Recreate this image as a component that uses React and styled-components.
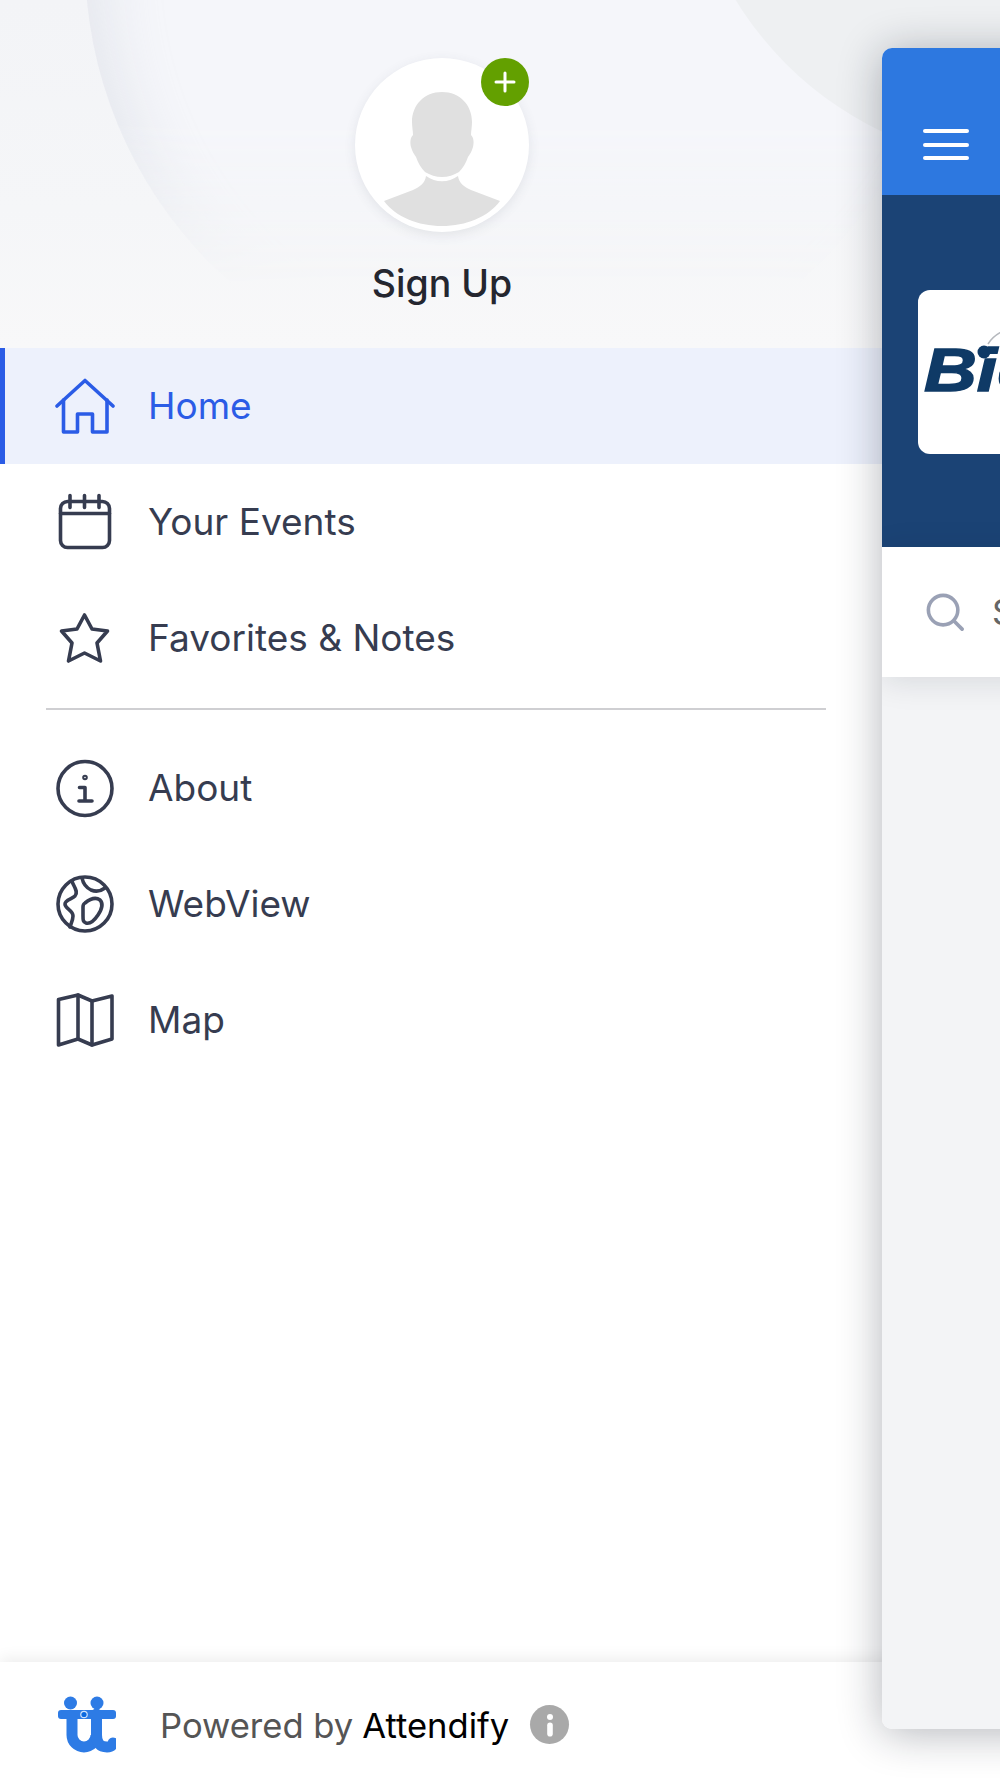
import React from 'react'
import styled, { createGlobalStyle } from 'styled-components'

const GlobalStyle = createGlobalStyle`
	html, body {
		margin: 0;
		padding: 0;
		background: #fff;
	}
	* {
		box-sizing: border-box;
	}
`

const Screen = styled.div`
	position: relative;
	width: 1000px;
	height: 1778px;
	overflow: hidden;
	display: flex;
	flex-direction: column;
	background: #fff;
	font-family: Inter, 'Liberation Sans', sans-serif;
`

const Header = styled.header`
	position: relative;
	height: 348px;
	flex-shrink: 0;
	overflow: hidden;
	display: flex;
	flex-direction: column;
	align-items: center;
	padding: 58px 116px 0 0;
	background: linear-gradient(180deg, #f3f4f7 0%, #f5f6f8 60%, #f8f8f9 100%);
`

const SwooshFade = styled.div`
	position: absolute;
	inset: 0;
	overflow: hidden;
	mask-image: linear-gradient(180deg, #000 35%, transparent 82%);
`

const LeftSwoosh = styled.div`
	position: absolute;
	left: 85px;
	top: -470px;
	width: 860px;
	height: 860px;
	border-radius: 50%;
	background: #f5f6fa;
	box-shadow: inset 30px 6px 60px -14px rgba(205, 210, 220, 0.42);
`

const RightSwoosh = styled.div`
	position: absolute;
	left: 685px;
	top: -525px;
	width: 690px;
	height: 690px;
	border-radius: 50%;
	background: #eef0f2;
`

const Avatar = styled.div`
	position: relative;
	width: 174px;
	height: 174px;
	border-radius: 50%;
	background: #fff;
	box-shadow: 0 3px 12px rgba(60, 70, 90, 0.1);

	& > svg {
		display: block;
	}
`

const AddBadge = styled.div`
	position: absolute;
	top: 0;
	right: 0;
	width: 48px;
	height: 48px;
	border-radius: 50%;
	background: #63a000;
	display: flex;
	align-items: center;
	justify-content: center;
`

const SignUp = styled.div`
	position: relative;
	margin-top: 30px;
	font-size: 37.5px;
	line-height: 44px;
	font-weight: 500;
	color: #24262f;
`

const Nav = styled.nav`
	display: flex;
	flex-direction: column;
`

const Row = styled.div`
	height: 116px;
	display: flex;
	align-items: center;
	gap: 33px;
	padding-left: 55px;
	font-size: 37px;
	color: ${(p) => (p.$active ? '#2b5ce6' : '#363c50')};
	background: ${(p) => (p.$active ? '#edf1fc' : 'transparent')};
	box-shadow: ${(p) => (p.$active ? 'inset 5px 0 0 #2b5ce6' : 'none')};

	& > span {
		margin-top: -2px;
	}

	& > svg {
		flex-shrink: 0;
		fill: none;
		stroke: currentColor;
		stroke-width: 3.6;
		stroke-linecap: round;
		stroke-linejoin: round;
	}
`

const Divider = styled.hr`
	width: 780px;
	height: 2px;
	margin: 12px 0 20px 46px;
	border: 0;
	background: #cfcfd2;
`

const Footer = styled.footer`
	height: 116px;
	margin-top: auto;
	display: flex;
	align-items: center;
	padding: 9px 0 0 58px;
	background: #fff;
	box-shadow: 0 -4px 14px rgba(0, 0, 0, 0.07);
	font-size: 34.6px;
`

const LogoMark = styled.svg`
	flex-shrink: 0;
	margin-right: 44px;
`

const Powered = styled.span`
	color: #555;
`

const Brand = styled.span`
	margin-left: 9px;
	color: #000;
`

const FooterInfo = styled.span`
	width: 39px;
	height: 39px;
	margin-left: 21px;
	border-radius: 50%;
	background: #a9a9a9;
	display: flex;
	align-items: center;
	justify-content: center;
`

const Panel = styled.aside`
	position: absolute;
	left: 882px;
	top: 48px;
	width: 400px;
	height: 1681px;
	border-radius: 10px;
	overflow: hidden;
	display: flex;
	flex-direction: column;
	background: #f3f4f6;
`

const PanelShadow = styled.div`
	position: absolute;
	left: 882px;
	top: 48px;
	width: 400px;
	height: 1681px;
	border-radius: 10px;
	box-shadow: 0 4px 44px rgba(20, 25, 40, 0.32);
`

const TopBar = styled.div`
	height: 147px;
	flex-shrink: 0;
	background: #2d78e0;
	display: flex;
	flex-direction: column;
	gap: 9.5px;
	padding: 81px 0 0 41px;
`

const BurgerLine = styled.span`
	width: 46px;
	height: 4px;
	border-radius: 2px;
	background: #fff;
`

const Banner = styled.div`
	height: 352px;
	flex-shrink: 0;
	background: #1b4375;
	padding: 95px 0 0 36px;
`

const LogoCard = styled.div`
	position: relative;
	width: 320px;
	height: 164px;
	border-radius: 12px;
	background: #fff;
	padding: 45px 0 0 6px;
	font-family: 'Liberation Sans', sans-serif;
	font-size: 62px;
	line-height: 70px;
	font-style: italic;
	font-weight: 700;
	color: #0f3a66;
`

const LogoWord = styled.span`
	display: inline-block;
	transform: scaleX(1.18);
	transform-origin: left center;
	-webkit-text-stroke: 1.5px #0f3a66;
`

const LogoArc = styled.svg`
	position: absolute;
	left: 50px;
	top: 30px;
`

const SearchBar = styled.div`
	height: 130px;
	flex-shrink: 0;
	background: #fff;
	display: flex;
	align-items: center;
	gap: 28px;
	padding: 0 0 0 44px;
	font-size: 35px;
	color: #666;
	box-shadow: 0 4px 30px rgba(20, 25, 40, 0.12);
`

const Home = () => (
	<svg width="60" height="60" viewBox="0 0 60 60">
		<path d="M2 30 30 4.5 58 30" />
		<path d="M8.5 24v32H22.5V38H37.5V56H52V24" />
	</svg>
)

const Calendar = () => (
	<svg width="60" height="60" viewBox="0 0 60 60">
		<rect x="5.5" y="9.5" width="49" height="46" rx="7" />
		<path d="M5.5 21.5h49M15 3.5v12M29.5 3.5v12M44 3.5v12" />
	</svg>
)

const Star = () => (
	<svg width="60" height="60" viewBox="0 0 60 60">
		<path d="M29.5 7 37 21 52.5 23 42 35 45.5 53 29.5 45 13.5 53 17 35 6.5 23 22 21Z" />
	</svg>
)

const Info = () => (
	<svg width="60" height="60" viewBox="0 0 60 60">
		<circle cx="30" cy="30.5" r="27" />
		<path d="M24.5 29.5H30V43M24 43H37" />
		<circle cx="30" cy="19.5" r="1" />
	</svg>
)

const Globe = () => (
	<svg width="60" height="60" viewBox="0 0 60 60">
		<circle cx="30" cy="30" r="27" />
		<path d="M17 7c1 5 7 10 3 15-3 3-10 4-10 8 0 5 8 6 8 12 0 4-2 8-3 11" />
		<path d="M27 4c1 5 3 9 9 12 5 2 10 1 14-2" />
		<path d="M30 29c5-4 11-6 15-3 4 4 2 9-2 15-4 6-8 9-12 8-3-1-3-3-3-7V33c0-2 0-3 2-4Z" />
	</svg>
)

const MapIcon = () => (
	<svg width="60" height="60" viewBox="0 0 60 60">
		<path d="M3.5 9.5 23 5 37 11 57 6V49L37 55 23 49 3.5 55Z" />
		<path d="M23 5V49M37 11V55" />
	</svg>
)

const Silhouette = () => (
	<svg width="174" height="174" viewBox="0 0 174 174" fill="#e0e0e0">
		<path d="M87 34c18 0 30 13 30 30 0 5-1 9-1 13 3 3 3 8 2 12-1 4-3 7-5 10-2 6-5 11-9 15-5 3-11 5-17 5s-12-2-17-5c-4-4-7-9-9-15-2-3-4-6-5-10-1-4-1-9 2-12 0-4-1-8-1-13 0-17 12-30 30-30Z" />
		<path d="M71 118c10 7 22 7 32 0 1 7 6 11 13 14l29 11c-12 16-34 25-58 25s-46-9-58-25l29-11c7-3 12-7 13-14Z" />
	</svg>
)

const TtLogo = () => (
	<LogoMark width="58" height="58" viewBox="0 0 58 58" fill="none">
		<circle cx="12.5" cy="7" r="6.5" fill="#2d7be5" />
		<circle cx="39" cy="7" r="6.5" fill="#2d7be5" />
		<path d="M14 18V39A12 12 0 0 0 38 39" stroke="#2d7be5" strokeWidth="11" />
		<path d="M38.5 18V39Q38.5 51 49 51Q54 51 55 47" stroke="#2d7be5" strokeWidth="11" strokeLinecap="round" />
		<rect x="0" y="14" width="58" height="9" rx="3" fill="#2d7be5" />
		<circle cx="26" cy="18.5" r="3.8" fill="#cfe2fb" />
		<circle cx="26" cy="18.5" r="2.6" fill="#0a68e0" />
	</LogoMark>
)

const TOP_ITEMS = [
	{ label: 'Home', Icon: Home, active: true },
	{ label: 'Your Events', Icon: Calendar },
	{ label: 'Favorites & Notes', Icon: Star }
]

const BOTTOM_ITEMS = [
	{ label: 'About', Icon: Info },
	{ label: 'WebView', Icon: Globe },
	{ label: 'Map', Icon: MapIcon }
]

const NavRow = ({ label, Icon, active }) => (
	<Row $active={active}>
		<Icon />
		<span>{label}</span>
	</Row>
)

export default function App() {
	return (
		<Screen>
			<GlobalStyle />
			<Header>
				<SwooshFade>
					<LeftSwoosh />
				</SwooshFade>
				<RightSwoosh />
				<Avatar>
					<Silhouette />
					<AddBadge>
						<svg width="22" height="22" viewBox="0 0 22 22">
							<path d="M11 2v18M2 11h18" stroke="#fff" strokeWidth="3" strokeLinecap="round" />
						</svg>
					</AddBadge>
				</Avatar>
				<SignUp>Sign Up</SignUp>
			</Header>
			<Nav>
				{TOP_ITEMS.map((item) => (
					<NavRow key={item.label} {...item} />
				))}
			</Nav>
			<Divider />
			<Nav>
				{BOTTOM_ITEMS.map((item) => (
					<NavRow key={item.label} {...item} />
				))}
			</Nav>
			<Footer>
				<TtLogo />
				<Powered>Powered by</Powered>
				<Brand>Attendify</Brand>
				<FooterInfo>
					<svg width="8" height="24" viewBox="0 0 8 24" fill="#fff">
						<circle cx="4" cy="4" r="3" />
						<rect x="1.2" y="9.5" width="5.6" height="14" rx="2.8" />
					</svg>
				</FooterInfo>
			</Footer>
			<PanelShadow />
			<Panel>
				<TopBar>
					<BurgerLine />
					<BurgerLine />
					<BurgerLine />
				</TopBar>
				<Banner>
					<LogoCard>
						<LogoWord>Bio</LogoWord>
						<LogoArc width="40" height="40" viewBox="0 0 40 40" fill="none">
							<path d="M20 24Q26 14 40 9" stroke="#b5b8bd" strokeWidth="1.5" />
							<circle cx="16" cy="32" r="6.5" fill="#0f3a66" />
						</LogoArc>
					</LogoCard>
				</Banner>
				<SearchBar>
					<svg width="38" height="38" viewBox="0 0 40 40" fill="none" stroke="#9aa1b5" strokeWidth="3.8" strokeLinecap="round">
						<circle cx="18" cy="18" r="15.5" />
						<path d="M29.5 29.5 38 38" />
					</svg>
					<span>Search</span>
				</SearchBar>
			</Panel>
		</Screen>
	)
}
